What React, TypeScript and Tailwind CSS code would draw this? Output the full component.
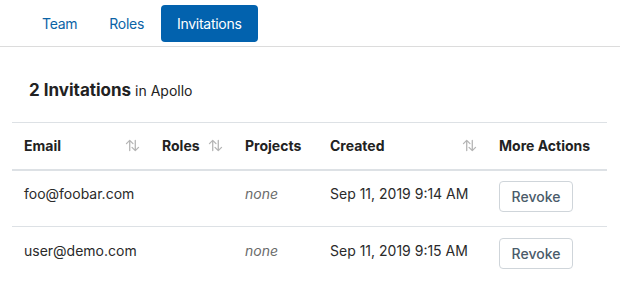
import { ReactNode } from 'react'

const invitations = [
  { email: 'foo@foobar.com', created: 'Sep 11, 2019 9:14 AM' },
  { email: 'user@demo.com', created: 'Sep 11, 2019 9:15 AM' },
]

function SortIcon() {
  return (
    <svg width="15" height="13" viewBox="0 0 16 14" fill="none" stroke="#b5b5b5" strokeWidth="1.4" strokeLinecap="round" strokeLinejoin="round">
      <path d="M5 12.5V1.5M1.5 5L5 1.5 8.5 5" />
      <path d="M11 1.5v11M7.5 9l3.5 3.5L14.5 9" />
    </svg>
  )
}

function Th({ children, sortable }: { children: ReactNode; sortable?: boolean }) {
  return (
    <th className="pl-3 pr-[10px] text-left font-bold text-[14px] text-[#222]">
      <div className="flex items-center justify-between">
        <span>{children}</span>
        {sortable && <SortIcon />}
      </div>
    </th>
  )
}

export default function App() {
  const tabs = ['Team', 'Roles', 'Invitations']
  return (
    <div className="w-[620px] h-[293px] bg-white text-[14px] text-[#2a2a2a]" style={{ fontFamily: 'Inter, "Noto Sans", sans-serif' }}>
      <div className="flex items-center h-[47px] pl-[26px] border-b border-[#dcdcdc]">
        {tabs.map((t) => (
          <button
            key={t}
            type="button"
            className={`h-[37px] px-4 rounded-[4px] text-[14px] tracking-[-0.02em] ${
              t === 'Invitations' ? 'bg-[#0262ae] text-white ml-px' : 'text-[#0b63a6]'
            }`}
          >
            {t}
          </button>
        ))}
      </div>

      <div className="px-3">
        <h2 className="pl-[17px] pt-[31px] pb-[19px] text-[#222] leading-6">
          <span className="text-[17px] font-bold">2 Invitations</span>{' '}
          <span className="text-[14px]">in Apollo</span>
        </h2>

        <table className="w-[595px] table-fixed border-collapse">
          <colgroup>
            <col className="w-[138px]" />
            <col className="w-[83px]" />
            <col className="w-[85px]" />
            <col className="w-[169px]" />
            <col className="w-[120px]" />
          </colgroup>
          <thead>
            <tr className="h-[47px] border-t border-[#dde1e5] border-b-2">
              <Th sortable>Email</Th>
              <Th sortable>Roles</Th>
              <Th>Projects</Th>
              <Th sortable>Created</Th>
              <Th>More Actions</Th>
            </tr>
          </thead>
          <tbody>
            {invitations.map((inv, i) => (
              <tr key={inv.email} className={`h-[57px] ${i === 0 ? 'border-b border-[#dde1e5]' : ''}`}>
                <td className="px-3 pb-[10px]">{inv.email}</td>
                <td className="px-3" />
                <td className="px-3 pb-[10px] italic text-[#6b6b6b]">none</td>
                <td className="px-3 pb-[10px]">{inv.created}</td>
                <td className="px-3 pb-[3px]">
                  <button
                    type="button"
                    className="h-[31px] w-[74px] rounded-[4px] border border-[#cfd5da] text-[14px] font-medium text-[#4a5b6a]"
                  >
                    Revoke
                  </button>
                </td>
              </tr>
            ))}
          </tbody>
        </table>
      </div>
    </div>
  )
}
